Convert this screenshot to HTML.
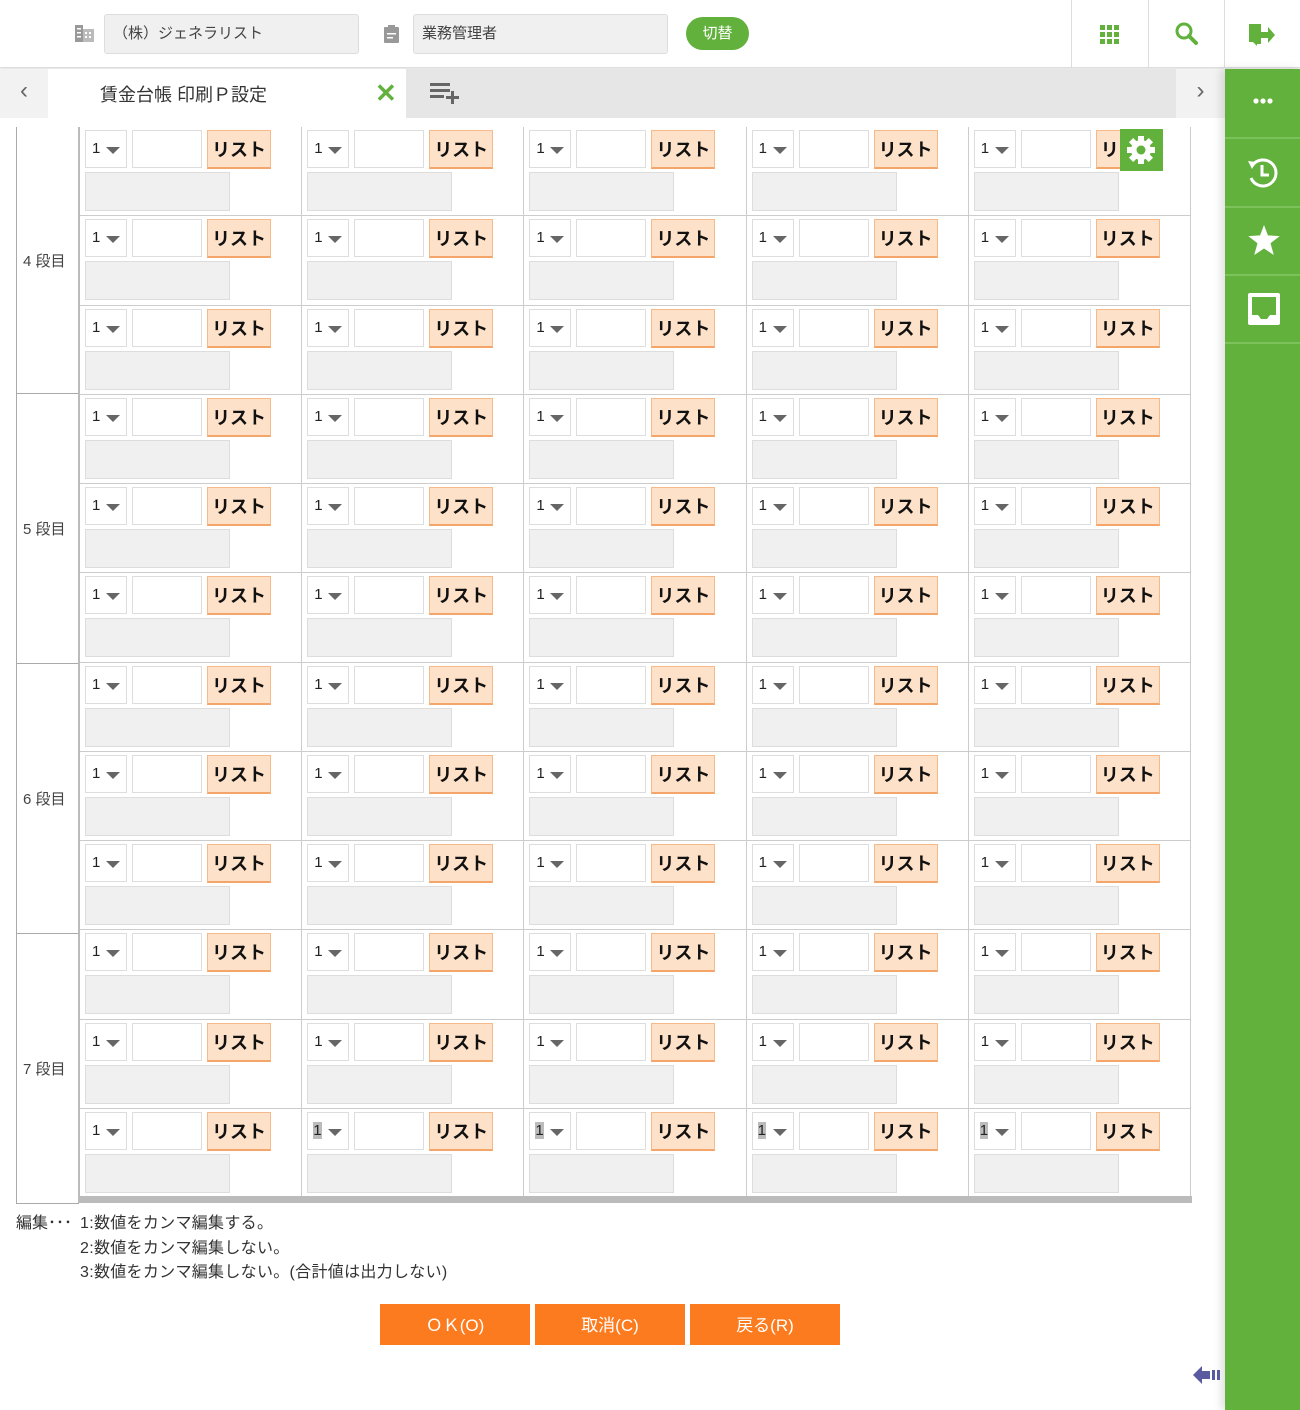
<!DOCTYPE html>
<html><head><meta charset="utf-8"><style>
*{box-sizing:border-box;margin:0;padding:0}
i{font-style:normal}
body{width:1300px;height:1410px;position:relative;background:#fff;font-family:"Liberation Sans","Noto Sans CJK JP",sans-serif;color:#333;overflow:hidden}
.a{position:absolute}
.hdr{left:0;top:0;width:1300px;height:68px;background:#fff;border-bottom:1px solid #ddd;box-shadow:0 1px 3px rgba(0,0,0,.15)}
.inp{background:#f0f0f0;border:1px solid #ddd;border-radius:3px;font-size:15px;padding:7px 0 0 8px;height:40px;color:#444}
.vd{top:0;width:1px;height:68px;background:#ddd}
.side{left:1225px;top:69px;width:75px;height:1341px;background:#62b13c;box-shadow:-4px 0 8px rgba(0,0,0,.12)}
.side .sep{position:absolute;left:0;width:75px;height:2px;background:#7cc25a}
.grid{left:80px;top:127px;display:grid;grid-template-columns:repeat(5,222.2px);grid-template-rows:repeat(12,89.25px);border-left:2px solid #bbb;margin-left:-2px}
.c{position:relative;border-right:1px solid #ccc;border-bottom:1px solid #ccc}
.c .s{position:absolute;left:5px;top:3px;width:42px;height:38px;border:1px solid #ddd;background:#fff;font-size:15px;padding:9px 0 0 6px;color:#222}
.c .s:after{content:"";position:absolute;left:20px;top:16px;border-left:7px solid transparent;border-right:7px solid transparent;border-top:7px solid #666}
.c .t{position:absolute;left:52px;top:3px;width:70px;height:38px;border:1px solid #ddd;background:#fff}
.c .b{position:absolute;left:127px;top:3px;width:64px;height:39px;background:#fde1c8;border:1px solid #f6b98a;border-bottom:2px solid #f3a56a;font-size:18px;font-weight:bold;color:#111;text-align:center;padding-top:5px}
.c .g{position:absolute;left:5px;top:45px;width:145px;height:39px;background:#f0f0f0;border:1px solid #ddd}
.h .s{padding:9px 0 0 5px}
.h .s span{background:#bbb}
.lab{left:16px;width:63px;border-left:1px solid #aaa;border-bottom:1px solid #aaa;font-size:15px;padding-left:6px;display:flex;align-items:center;color:#444}
.btn{top:1304px;width:150px;height:41px;background:#fc7b1e;color:#fff;font-size:17px;text-align:center;padding-top:7px}
</style></head><body>
<div class="a hdr"></div>
<svg class="a" style="left:75px;top:24px" width="19" height="18" viewBox="0 0 19 18"><rect x="0" y="1" width="8" height="17" fill="#999"/><rect x="8" y="5" width="11" height="13" fill="#bbb"/><g fill="#fff"><rect x="2" y="4" width="4" height="1.5"/><rect x="2" y="8" width="4" height="1.5"/><rect x="2" y="12" width="4" height="1.5"/><rect x="10" y="8" width="2" height="2"/><rect x="14" y="8" width="2" height="2"/><rect x="10" y="12" width="2" height="2"/><rect x="14" y="12" width="2" height="2"/></g></svg>
<div class="a inp" style="left:104px;top:14px;width:255px">（株）ジェネラリスト</div>
<svg class="a" style="left:384px;top:25px" width="15" height="18" viewBox="0 0 15 18"><rect x="0" y="2" width="15" height="16" rx="1" fill="#999"/><rect x="4" y="0" width="7" height="4" fill="#999"/><rect x="3" y="8" width="9" height="1.5" fill="#fff"/><rect x="3" y="12" width="6" height="1.5" fill="#fff"/></svg>
<div class="a inp" style="left:413px;top:14px;width:255px">業務管理者</div>
<div class="a" style="left:686px;top:17px;width:63px;height:33px;border-radius:17px;background:#62b13c;color:#fff;font-size:15px;text-align:center;padding-top:5px">切替</div>
<div class="a vd" style="left:1071px"></div><div class="a vd" style="left:1148px"></div><div class="a vd" style="left:1224px"></div>
<svg class="a" style="left:1100px;top:25px" width="20" height="20"><g fill="#62b13c"><rect x="0" y="0" width="5" height="5"/><rect x="7" y="0" width="5" height="5"/><rect x="14" y="0" width="5" height="5"/><rect x="0" y="7" width="5" height="5"/><rect x="7" y="7" width="5" height="5"/><rect x="14" y="7" width="5" height="5"/><rect x="0" y="14" width="5" height="5"/><rect x="7" y="14" width="5" height="5"/><rect x="14" y="14" width="5" height="5"/></g></svg>
<svg class="a" style="left:1175px;top:22px" width="24" height="24"><circle cx="9" cy="9" r="7" fill="none" stroke="#62b13c" stroke-width="3"/><path d="M14 14 L21 21" stroke="#62b13c" stroke-width="4" stroke-linecap="round"/></svg>
<svg class="a" style="left:1248px;top:22px" width="30" height="26"><path d="M1 2 H13 V6 H9 V24 L5 20 H1 Z" fill="#62b13c"/><rect x="8" y="2" width="5" height="20" fill="#62b13c"/><path d="M13 10 H20 V5 L27 13 L20 21 V16 H13 Z" fill="#62b13c"/></svg>
<div class="a" style="left:0;top:69px;width:1225px;height:49px;background:#e6e6e6"></div>
<div class="a" style="left:0;top:69px;width:48px;height:49px;background:#f2f2f2;font-size:24px;color:#666;text-align:center;padding-top:8px">&lsaquo;</div>
<div class="a" style="left:48px;top:69px;width:358px;height:49px;background:#fff;font-size:18px;color:#333;padding:12px 0 0 52px">賃金台帳 印刷Ｐ設定</div>
<div class="a" style="left:375px;top:78px;font-size:26px;font-weight:bold;color:#62b13c">✕</div>
<svg class="a" style="left:430px;top:83px" width="30" height="22"><g fill="#666"><rect x="0" y="0" width="20" height="3"/><rect x="0" y="6" width="20" height="3"/><rect x="0" y="12" width="14" height="3"/><rect x="16" y="13" width="13" height="3"/><rect x="21" y="8" width="3" height="13"/></g></svg>
<div class="a" style="left:1176px;top:69px;width:49px;height:49px;background:#f2f2f2;font-size:24px;color:#666;text-align:center;padding-top:8px">&rsaquo;</div>
<div class="a side"><div class="sep" style="top:68px"></div><div class="sep" style="top:137px"></div><div class="sep" style="top:205px"></div><div class="sep" style="top:273px"></div>
<svg class="a" style="left:28px;top:29px" width="20" height="6"><circle cx="3" cy="3" r="2.6" fill="#fff"/><circle cx="10" cy="3" r="2.6" fill="#fff"/><circle cx="17" cy="3" r="2.6" fill="#fff"/></svg>
<svg class="a" style="left:21px;top:87px" width="34" height="34" viewBox="0 0 34 34"><path d="M6 10 A13 13 0 1 1 5 22" fill="none" stroke="#fff" stroke-width="3"/><path d="M2 5 L10 6 L6 13Z" fill="#fff"/><path d="M16 9 V19 H23" fill="none" stroke="#fff" stroke-width="3"/></svg>
<svg class="a" style="left:23px;top:156px" width="32" height="30" viewBox="0 0 24 23"><path d="M12 0 L15 8 L24 8.5 L17 14 L19.5 23 L12 18 L4.5 23 L7 14 L0 8.5 L9 8 Z" fill="#fff"/></svg>
<svg class="a" style="left:23px;top:224px" width="32" height="32" viewBox="0 0 32 32"><path d="M2 0 H30 Q32 0 32 2 V30 Q32 32 30 32 H2 Q0 32 0 30 V2 Q0 0 2 0Z M4 4 V22 H10 L13 26 H19 L22 22 H28 V4 Z" fill="#fff" fill-rule="evenodd"/></svg>
</div>
<div class="a lab" style="top:127px;height:267px">4 段目</div>
<div class="a lab" style="top:394px;height:270px">5 段目</div>
<div class="a lab" style="top:664px;height:270px">6 段目</div>
<div class="a lab" style="top:934px;height:270px">7 段目</div>
<div class="a" style="left:78px;top:127px;width:2px;height:1076px;background:#bbb"></div>
<div class="a grid">
<div class="c"><i class="s">1</i><i class="t"></i><b class="b">リスト</b><i class="g"></i></div><div class="c"><i class="s">1</i><i class="t"></i><b class="b">リスト</b><i class="g"></i></div><div class="c"><i class="s">1</i><i class="t"></i><b class="b">リスト</b><i class="g"></i></div><div class="c"><i class="s">1</i><i class="t"></i><b class="b">リスト</b><i class="g"></i></div><div class="c"><i class="s">1</i><i class="t"></i><b class="b">リスト</b><i class="g"></i></div>
<div class="c"><i class="s">1</i><i class="t"></i><b class="b">リスト</b><i class="g"></i></div><div class="c"><i class="s">1</i><i class="t"></i><b class="b">リスト</b><i class="g"></i></div><div class="c"><i class="s">1</i><i class="t"></i><b class="b">リスト</b><i class="g"></i></div><div class="c"><i class="s">1</i><i class="t"></i><b class="b">リスト</b><i class="g"></i></div><div class="c"><i class="s">1</i><i class="t"></i><b class="b">リスト</b><i class="g"></i></div>
<div class="c"><i class="s">1</i><i class="t"></i><b class="b">リスト</b><i class="g"></i></div><div class="c"><i class="s">1</i><i class="t"></i><b class="b">リスト</b><i class="g"></i></div><div class="c"><i class="s">1</i><i class="t"></i><b class="b">リスト</b><i class="g"></i></div><div class="c"><i class="s">1</i><i class="t"></i><b class="b">リスト</b><i class="g"></i></div><div class="c"><i class="s">1</i><i class="t"></i><b class="b">リスト</b><i class="g"></i></div>
<div class="c"><i class="s">1</i><i class="t"></i><b class="b">リスト</b><i class="g"></i></div><div class="c"><i class="s">1</i><i class="t"></i><b class="b">リスト</b><i class="g"></i></div><div class="c"><i class="s">1</i><i class="t"></i><b class="b">リスト</b><i class="g"></i></div><div class="c"><i class="s">1</i><i class="t"></i><b class="b">リスト</b><i class="g"></i></div><div class="c"><i class="s">1</i><i class="t"></i><b class="b">リスト</b><i class="g"></i></div>
<div class="c"><i class="s">1</i><i class="t"></i><b class="b">リスト</b><i class="g"></i></div><div class="c"><i class="s">1</i><i class="t"></i><b class="b">リスト</b><i class="g"></i></div><div class="c"><i class="s">1</i><i class="t"></i><b class="b">リスト</b><i class="g"></i></div><div class="c"><i class="s">1</i><i class="t"></i><b class="b">リスト</b><i class="g"></i></div><div class="c"><i class="s">1</i><i class="t"></i><b class="b">リスト</b><i class="g"></i></div>
<div class="c"><i class="s">1</i><i class="t"></i><b class="b">リスト</b><i class="g"></i></div><div class="c"><i class="s">1</i><i class="t"></i><b class="b">リスト</b><i class="g"></i></div><div class="c"><i class="s">1</i><i class="t"></i><b class="b">リスト</b><i class="g"></i></div><div class="c"><i class="s">1</i><i class="t"></i><b class="b">リスト</b><i class="g"></i></div><div class="c"><i class="s">1</i><i class="t"></i><b class="b">リスト</b><i class="g"></i></div>
<div class="c"><i class="s">1</i><i class="t"></i><b class="b">リスト</b><i class="g"></i></div><div class="c"><i class="s">1</i><i class="t"></i><b class="b">リスト</b><i class="g"></i></div><div class="c"><i class="s">1</i><i class="t"></i><b class="b">リスト</b><i class="g"></i></div><div class="c"><i class="s">1</i><i class="t"></i><b class="b">リスト</b><i class="g"></i></div><div class="c"><i class="s">1</i><i class="t"></i><b class="b">リスト</b><i class="g"></i></div>
<div class="c"><i class="s">1</i><i class="t"></i><b class="b">リスト</b><i class="g"></i></div><div class="c"><i class="s">1</i><i class="t"></i><b class="b">リスト</b><i class="g"></i></div><div class="c"><i class="s">1</i><i class="t"></i><b class="b">リスト</b><i class="g"></i></div><div class="c"><i class="s">1</i><i class="t"></i><b class="b">リスト</b><i class="g"></i></div><div class="c"><i class="s">1</i><i class="t"></i><b class="b">リスト</b><i class="g"></i></div>
<div class="c"><i class="s">1</i><i class="t"></i><b class="b">リスト</b><i class="g"></i></div><div class="c"><i class="s">1</i><i class="t"></i><b class="b">リスト</b><i class="g"></i></div><div class="c"><i class="s">1</i><i class="t"></i><b class="b">リスト</b><i class="g"></i></div><div class="c"><i class="s">1</i><i class="t"></i><b class="b">リスト</b><i class="g"></i></div><div class="c"><i class="s">1</i><i class="t"></i><b class="b">リスト</b><i class="g"></i></div>
<div class="c"><i class="s">1</i><i class="t"></i><b class="b">リスト</b><i class="g"></i></div><div class="c"><i class="s">1</i><i class="t"></i><b class="b">リスト</b><i class="g"></i></div><div class="c"><i class="s">1</i><i class="t"></i><b class="b">リスト</b><i class="g"></i></div><div class="c"><i class="s">1</i><i class="t"></i><b class="b">リスト</b><i class="g"></i></div><div class="c"><i class="s">1</i><i class="t"></i><b class="b">リスト</b><i class="g"></i></div>
<div class="c"><i class="s">1</i><i class="t"></i><b class="b">リスト</b><i class="g"></i></div><div class="c"><i class="s">1</i><i class="t"></i><b class="b">リスト</b><i class="g"></i></div><div class="c"><i class="s">1</i><i class="t"></i><b class="b">リスト</b><i class="g"></i></div><div class="c"><i class="s">1</i><i class="t"></i><b class="b">リスト</b><i class="g"></i></div><div class="c"><i class="s">1</i><i class="t"></i><b class="b">リスト</b><i class="g"></i></div>
<div class="c"><i class="s">1</i><i class="t"></i><b class="b">リスト</b><i class="g"></i></div><div class="c h"><i class="s"><span>1</span></i><i class="t"></i><b class="b">リスト</b><i class="g"></i></div><div class="c h"><i class="s"><span>1</span></i><i class="t"></i><b class="b">リスト</b><i class="g"></i></div><div class="c h"><i class="s"><span>1</span></i><i class="t"></i><b class="b">リスト</b><i class="g"></i></div><div class="c h"><i class="s"><span>1</span></i><i class="t"></i><b class="b">リスト</b><i class="g"></i></div>
</div>
<div class="a" style="left:80px;top:1196px;width:1112px;height:7px;background:#bbb"></div>
<div class="a" style="left:1120px;top:129px;width:43px;height:42px;background:#62b13c"></div>
<svg class="a" style="left:1126px;top:135px" width="30" height="30" viewBox="0 0 30 30"><g fill="#fff" transform="translate(15 15)"><rect x="-3" y="-14" width="6" height="28"/><rect x="-3" y="-14" width="6" height="28" transform="rotate(45)"/><rect x="-3" y="-14" width="6" height="28" transform="rotate(90)"/><rect x="-3" y="-14" width="6" height="28" transform="rotate(135)"/><circle r="10"/></g><circle cx="15" cy="15" r="4.5" fill="#62b13c"/></svg>
<div class="a" style="left:16px;top:1212px;font-size:16px;line-height:24.5px;color:#333">編集･･･</div>
<div class="a" style="left:80px;top:1212px;font-size:16px;line-height:24.5px;color:#333;letter-spacing:0.3px">1:数値をカンマ編集する。<br>2:数値をカンマ編集しない。<br>3:数値をカンマ編集しない。(合計値は出力しない)</div>
<div class="a btn" style="left:380px">ＯＫ(O)</div>
<div class="a btn" style="left:535px">取消(C)</div>
<div class="a btn" style="left:690px">戻る(R)</div>
<svg class="a" style="left:1192px;top:1363px" width="32" height="24"><path d="M1 12 L10 3 V8 H18 V16 H10 V21 Z" fill="#5a5aa0"/><rect x="20" y="7" width="3" height="10" fill="#5a5aa0"/><rect x="25" y="7" width="3" height="10" fill="#5a5aa0"/></svg>
</body></html>
